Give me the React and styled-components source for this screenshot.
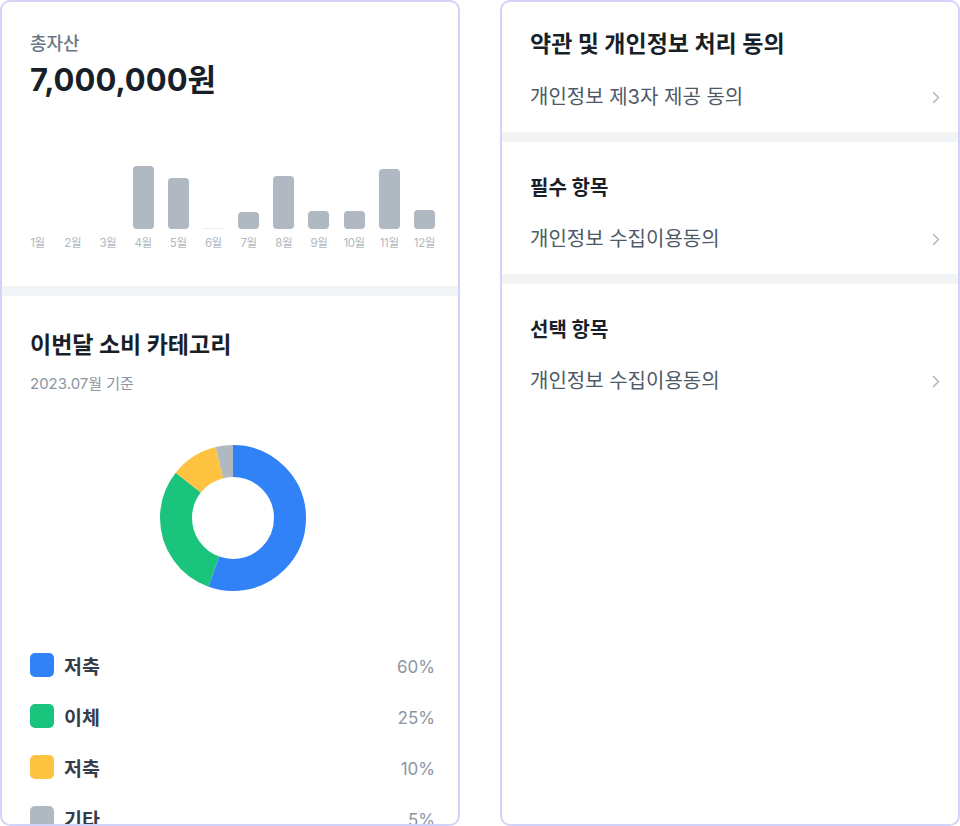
import React from 'react';
import styled, { createGlobalStyle } from 'styled-components';

const GlobalStyle = createGlobalStyle`
  html, body {
    margin: 0;
    padding: 0;
    background: #fff;
  }
  body {
    font-family: Inter, "Noto Sans CJK KR", sans-serif;
    color: #191f28;
  }
`;

const months = [
  { label: '1월', value: 0 },
  { label: '2월', value: 0 },
  { label: '3월', value: 0 },
  { label: '4월', value: 63 },
  { label: '5월', value: 51 },
  { label: '6월', value: 0, flat: true },
  { label: '7월', value: 17 },
  { label: '8월', value: 53 },
  { label: '9월', value: 18 },
  { label: '10월', value: 18 },
  { label: '11월', value: 60 },
  { label: '12월', value: 19 },
];

// slices as drawn on the ring (start at 12 o'clock, clockwise)
const slices = [
  { color: '#3182f6', share: 55.4 },
  { color: '#1bc47d', share: 30.1 },
  { color: '#ffc342', share: 10.5 },
  { color: '#b0b8c1', share: 4.0 },
];

const legend = [
  { color: '#3182f6', name: '저축', pct: '60%' },
  { color: '#1bc47d', name: '이체', pct: '25%' },
  { color: '#ffc342', name: '저축', pct: '10%' },
  { color: '#b0b8c1', name: '기타', pct: '5%' },
];

const terms = [
  { heading: '약관 및 개인정보 처리 동의', item: '개인정보 제3자 제공 동의', big: true },
  { heading: '필수 항목', item: '개인정보 수집이용동의' },
  { heading: '선택 항목', item: '개인정보 수집이용동의' },
];

function Donut() {
  const r = 57;
  const c = 2 * Math.PI * r;
  let offset = 0;
  return (
    <DonutSvg width="146" height="146" viewBox="0 0 146 146">
      <g transform="rotate(-90 73 73)">
        {slices.map((s, i) => {
          const len = (s.share / 100) * c;
          const el = (
            <circle
              key={i}
              cx="73"
              cy="73"
              r={r}
              fill="none"
              stroke={s.color}
              strokeWidth="32"
              strokeDasharray={`${len} ${c - len}`}
              strokeDashoffset={-offset}
            />
          );
          offset += len;
          return el;
        })}
      </g>
    </DonutSvg>
  );
}

function Chevron() {
  return (
    <svg width="8" height="13" viewBox="0 0 8 13">
      <polyline
        points="1.5,1.5 6.5,6.5 1.5,11.5"
        fill="none"
        stroke="#b0b8c1"
        strokeWidth="1.6"
        strokeLinecap="round"
        strokeLinejoin="round"
      />
    </svg>
  );
}

export default function App() {
  return (
    <>
      <GlobalStyle />
      <Page>
        <Card>
          <AssetSection>
            <Caption>총자산</Caption>
            <Amount>7,000,000원</Amount>
            <Chart>
              {months.map((m) => (
                <Column key={m.label}>
                  <BarSlot>
                    {m.flat ? <FlatLine /> : m.value > 0 && <Bar style={{ height: m.value }} />}
                  </BarSlot>
                  <MonthLabel>{m.label}</MonthLabel>
                </Column>
              ))}
            </Chart>
          </AssetSection>
          <Divider />
          <CategorySection>
            <SectionTitle>이번달 소비 카테고리</SectionTitle>
            <SubText>2023.07월 기준</SubText>
            <DonutWrap>
              <Donut />
            </DonutWrap>
            <Legend>
              {legend.map((l, i) => (
                <LegendRow key={i}>
                  <Swatch color={l.color} />
                  <LegendName>{l.name}</LegendName>
                  <LegendPct>{l.pct}</LegendPct>
                </LegendRow>
              ))}
            </Legend>
          </CategorySection>
        </Card>

        <Card>
          {terms.map((t, i) => (
            <React.Fragment key={i}>
              {i > 0 && <Divider />}
              <TermsSection first={i === 0}>
                <TermsHeading big={t.big}>{t.heading}</TermsHeading>
                <TermsRow>
                  <span>{t.item}</span>
                  <Chevron />
                </TermsRow>
              </TermsSection>
            </React.Fragment>
          ))}
        </Card>
      </Page>
    </>
  );
}

const Page = styled.div`
  display: flex;
  gap: 40px;
  width: 960px;
  height: 826px;
`;

const Card = styled.div`
  box-sizing: border-box;
  width: 460px;
  height: 826px;
  border: 2px solid #d3d3fa;
  border-radius: 10px;
  overflow: hidden;
  background: #fff;
  display: flex;
  flex-direction: column;
`;

const AssetSection = styled.div`
  padding: 31px 23px 35px 28px;
`;

const Caption = styled.div`
  font-size: 18px;
  line-height: 22px;
  color: #6b7684;
  font-weight: 500;
`;

const Amount = styled.div`
  margin-top: 5px;
  font-size: 31px;
  line-height: 40px;
  font-weight: 700;
  color: #191f28;
`;

const Chart = styled.div`
  margin: 59px 0 0 -3px;
  display: flex;
  justify-content: space-between;
`;

const Column = styled.div`
  width: 21px;
  display: flex;
  flex-direction: column;
  align-items: center;
`;

const BarSlot = styled.div`
  height: 70px;
  width: 21px;
  display: flex;
  align-items: flex-end;
`;

const Bar = styled.div`
  width: 100%;
  background: #b0b8c1;
  border-radius: 4px;
`;

const FlatLine = styled.div`
  width: 100%;
  height: 1px;
  background: #eef0f3;
`;

const MonthLabel = styled.div`
  margin-top: 6px;
  font-size: 11.5px;
  line-height: 16px;
  color: #b0b8c1;
  white-space: nowrap;
  letter-spacing: -0.4px;
`;

const Divider = styled.div`
  height: 10px;
  flex-shrink: 0;
  background: #f2f4f6;
`;

const CategorySection = styled.div`
  padding: 33px 23px 0 28px;
`;

const SectionTitle = styled.div`
  font-size: 23px;
  line-height: 32px;
  font-weight: 700;
  color: #191f28;
`;

const SubText = styled.div`
  margin-top: 12px;
  font-size: 15px;
  line-height: 22px;
  color: #8b95a1;
`;

const DonutWrap = styled.div`
  margin-top: 50px;
  display: flex;
  justify-content: center;
`;

const DonutSvg = styled.svg`
  display: block;
`;

const Legend = styled.div`
  margin-top: 62px;
  display: flex;
  flex-direction: column;
  gap: 27px;
`;

const LegendRow = styled.div`
  display: flex;
  align-items: center;
  height: 24px;
`;

const Swatch = styled.div`
  width: 24px;
  height: 24px;
  border-radius: 5px;
  background: ${(p) => p.color};
`;

const LegendName = styled.div`
  margin-left: 10px;
  font-size: 19.5px;
  font-weight: 700;
  color: #333d4b;
`;

const LegendPct = styled.div`
  margin-left: auto;
  margin-top: 4px;
  font-size: 17px;
  color: #8b95a1;
`;

const TermsSection = styled.div`
  padding: ${(p) => (p.first ? '27px' : '33px')} 18px 22px 28px;
`;

const TermsHeading = styled.div`
  font-size: ${(p) => (p.big ? '23px' : '20px')};
  line-height: ${(p) => (p.big ? '30px' : '26px')};
  font-weight: 700;
  color: #191f28;
`;

const TermsRow = styled.div`
  margin-top: 25px;
  display: flex;
  align-items: center;
  justify-content: space-between;
  font-size: 20px;
  line-height: 26px;
  color: #4e5968;
  cursor: pointer;
`;
